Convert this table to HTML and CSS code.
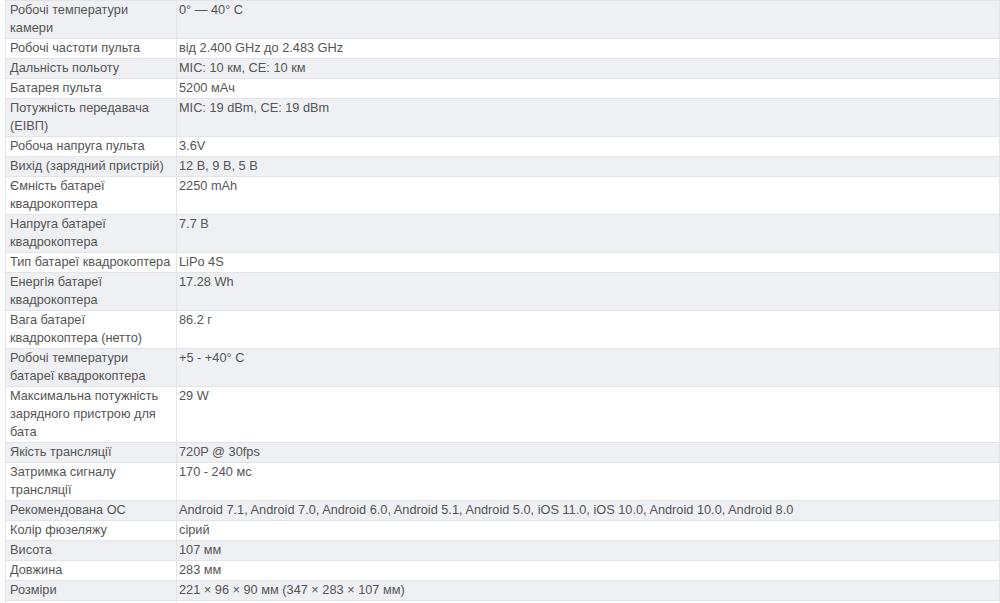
FILE: index.html
```html
<!DOCTYPE html>
<html lang="uk">
<head>
<meta charset="utf-8">
<link rel="stylesheet" href="styles.css">
</head>
<body>
<table class="specs">
<tbody>
<tr><td class="k">Робочі температури камери</td><td class="v">0° — 40° C</td></tr>
<tr><td class="k">Робочі частоти пульта</td><td class="v">від 2.400 GHz до 2.483 GHz</td></tr>
<tr><td class="k">Дальність польоту</td><td class="v">MIC: 10 км, CE: 10 км</td></tr>
<tr><td class="k">Батарея пульта</td><td class="v">5200 мАч</td></tr>
<tr><td class="k">Потужність передавача (ЕІВП)</td><td class="v">MIC: 19 dBm, CE: 19 dBm</td></tr>
<tr><td class="k">Робоча напруга пульта</td><td class="v">3.6V</td></tr>
<tr><td class="k">Вихід (зарядний пристрій)</td><td class="v">12 В, 9 В, 5 В</td></tr>
<tr><td class="k">Ємність батареї квадрокоптера</td><td class="v">2250 mAh</td></tr>
<tr><td class="k">Напруга батареї квадрокоптера</td><td class="v">7.7 В</td></tr>
<tr><td class="k">Тип батареї квадрокоптера</td><td class="v">LiPo 4S</td></tr>
<tr><td class="k">Енергія батареї квадрокоптера</td><td class="v">17.28 Wh</td></tr>
<tr><td class="k">Вага батареї квадрокоптера (нетто)</td><td class="v">86.2 г</td></tr>
<tr><td class="k">Робочі температури батареї квадрокоптера</td><td class="v">+5 - +40° C</td></tr>
<tr><td class="k">Максимальна потужність зарядного пристрою для бата</td><td class="v">29 W</td></tr>
<tr><td class="k">Якість трансляції</td><td class="v">720P @ 30fps</td></tr>
<tr><td class="k">Затримка сигналу трансляції</td><td class="v">170 - 240 мс</td></tr>
<tr><td class="k">Рекомендована ОС</td><td class="v">Android 7.1, Android 7.0, Android 6.0, Android 5.1, Android 5.0, iOS 11.0, iOS 10.0, Android 10.0, Android 8.0</td></tr>
<tr><td class="k">Колір фюзеляжу</td><td class="v">сірий</td></tr>
<tr><td class="k">Висота</td><td class="v">107 мм</td></tr>
<tr><td class="k">Довжина</td><td class="v">283 мм</td></tr>
<tr><td class="k">Розміри</td><td class="v">221 × 96 × 90 мм (347 × 283 × 107 мм)</td></tr>
<tr><td class="k">&nbsp;</td><td class="v">&nbsp;</td></tr>
</tbody>
</table>
</body>
</html>
```

FILE: styles.css
```css
html, body {
  margin: 0;
  padding: 0;
  background: #ffffff;
}

body {
  padding-left: 5px;
  font-family: "Liberation Sans", Arial, sans-serif;
  font-size: 12.75px;
  line-height: 18px;
  color: #555555;
}

.specs {
  width: 995px;
  border-collapse: collapse;
  table-layout: fixed;
}

.specs tr:nth-child(odd) {
  background: #eff0f3;
}

.specs tr:nth-child(even) {
  background: #ffffff;
}

.specs td {
  padding: 0 4px 1px 4px;
  border: 1px solid #e3e4e8;
  vertical-align: top;
}

.specs .k {
  width: 162px;
}

.specs .v {
  padding-left: 2px;
}
```
